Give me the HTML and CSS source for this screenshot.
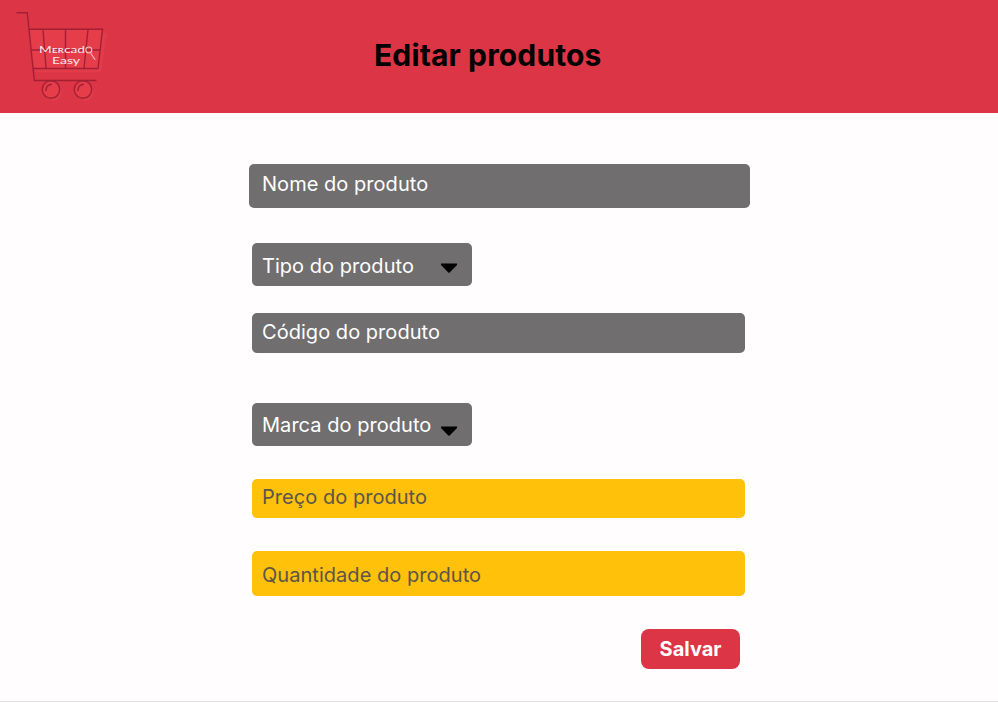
FILE: index.html
```html
<!DOCTYPE html>
<html lang="pt-BR">
<head>
<meta charset="utf-8">
<title>Editar produtos</title>
<link rel="stylesheet" href="styles.css">
</head>
<body>
<header class="header">
  <svg class="logo" width="130" height="113" viewBox="0 0 130 113" role="img" aria-label="Mercado Easy">
    <path class="logo-shade" d="M32 33H107L101 72H36Z"/>
    <circle class="logo-shade" cx="53" cy="92" r="9"/>
    <circle class="logo-shade" cx="85" cy="92" r="9"/>
    <path class="logo-panel" d="M29 29.3H102.500L98 68.500H33Z"/>
    <circle class="logo-panel" cx="51" cy="89.500" r="8.700"/>
    <circle class="logo-panel" cx="83" cy="89.500" r="8.700"/>
    <g class="logo-line">
      <path d="M16.500 12.700H27.300L34.300 80.500H96.500M29 29.300H102.500L98 68.500H33M31 50H99.500M43 29.500L46 68M65.500 29.500V68M88 29.500L84 68"/>
      <circle cx="51" cy="89.500" r="8.700"/>
      <circle cx="83" cy="89.500" r="8.700"/>
      <path d="M46 91Q46 84.500 52 84.300M78 91Q78 84.500 84 84.300"/>
    </g>
    <g class="logo-text">
      <text x="39" y="53.300" textLength="46" lengthAdjust="spacingAndGlyphs">Mᴇʀcad</text>
      <text x="52" y="63.500" textLength="28" lengthAdjust="spacingAndGlyphs">Easy</text>
    </g>
    <g class="logo-glass"><circle cx="88.800" cy="50" r="3"/><path d="M90.800 53.500L95.200 59.700"/></g>
  </svg>
  <h1 class="title">Editar produtos</h1>
</header>
<main class="form">
  <div class="field name">Nome do produto</div>
  <div class="field select type">Tipo do produto<svg class="arrow" width="18" height="11" viewBox="0 0 18 11"><path d="M1 .5H17V2L9.700 9.500Q9 10.200 8.300 9.500L1 2Z"/></svg></div>
  <div class="field code">Código do produto</div>
  <div class="field select brand">Marca do produto<svg class="arrow" width="18" height="11" viewBox="0 0 18 11"><path d="M1 .5H17V2L9.700 9.500Q9 10.200 8.300 9.500L1 2Z"/></svg></div>
  <div class="field accent price">Preço do produto</div>
  <div class="field accent quantity">Quantidade do produto</div>
  <button class="save" type="button">Salvar</button>
</main>
</body>
</html>
```
FILE: styles.css
```css
* { box-sizing: border-box; }
body {
  margin: 0;
  height: 702px;
  display: flex;
  flex-direction: column;
  overflow: hidden;
  background: #fffdfe;
  font-family: Inter, "Liberation Sans", sans-serif;
}
.header {
  display: flex;
  height: 113px;
  background: #dc3545;
}
.logo { flex: none; }
.title {
  margin: 37px 0 0 244px;
  font-size: 30px;
  line-height: 36px;
  font-weight: 700;
  letter-spacing: .14px;
  color: #000;
  white-space: nowrap;
}
.logo-shade { fill: #e23b49; }
.logo-panel { fill: #e63d4a; }
.logo-line { fill: none; stroke: #a32034; stroke-width: 1.4; }
.logo-text { fill: #fbe9ec; font-family: Lato, sans-serif; font-size: 9.5px; }
.logo-glass { fill: none; stroke: #f3c5cb; stroke-width: 1.1; }
.form {
  flex: 1;
  display: flex;
  flex-direction: column;
  align-items: flex-start;
  padding: 51px 0 0 252px;
  border-bottom: 1px solid #e2e0e1;
}
.field {
  flex: none;
  width: 493px;
  padding-left: 10px;
  border-radius: 5px;
  background: #706e6f;
  color: #fff;
  font-size: 20px;
  font-weight: 400;
  line-height: 24px;
  letter-spacing: .04px;
  white-space: nowrap;
}
.name { width: 501px; height: 44px; margin-left: -3px; padding: 8px 0 0 13px; }
.select { display: flex; justify-content: space-between; width: 220px; height: 43px; padding-right: 14px; }
.type { margin-top: 35px; padding-top: 11px; }
.code { height: 40px; margin-top: 27px; padding-top: 7px; }
.brand { margin-top: 50px; padding-top: 10px; }
.arrow { flex: none; margin-top: 9px; }
.brand .arrow { margin-top: 13px; }
.accent { background: #ffc109; color: #5b554b; }
.price { height: 39px; margin-top: 33px; padding-top: 6px; }
.quantity { height: 45px; margin-top: 33px; padding-top: 12px; }
.save {
  flex: none;
  width: 99px;
  height: 40px;
  margin: 33px 0 0 389px;
  padding: 0;
  border: 0;
  border-radius: 8px;
  background: #dc3545;
  color: #fff;
  font: 700 20px/24px Inter, "Liberation Sans", sans-serif;
}
```
